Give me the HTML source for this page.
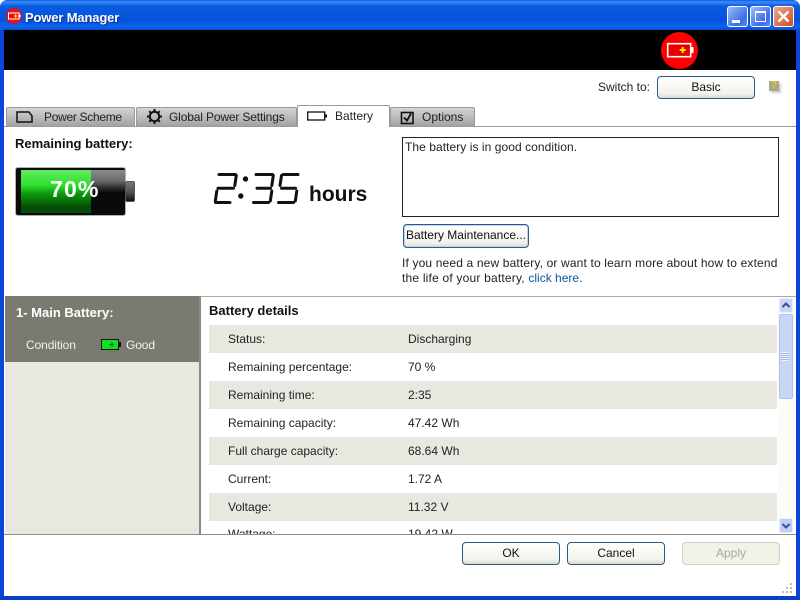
<!DOCTYPE html>
<html><head><meta charset="utf-8"><style>
*{box-sizing:border-box}
html,body{margin:0;padding:0;width:800px;height:600px;overflow:hidden;background:#fff}
body{position:relative;font:12px "Liberation Sans",sans-serif;color:#222}
.a{position:absolute;white-space:nowrap}
.tab{position:absolute;top:107px;height:19px;background:linear-gradient(#d4d4d4,#a2a2a2);border:1px solid #999;border-bottom:0;border-radius:2px 2px 0 0}
.btn{position:absolute;height:23px;border:1px solid #2a5a88;border-radius:4px;background:linear-gradient(#fff,#f3f2ea 80%,#dcd8cc);text-align:center;line-height:20px;color:#111}
.row{position:absolute;left:209px;width:568px;height:28px;background:#e8e8e1}
.l{position:absolute;left:228px}.v{position:absolute;left:408px}
</style></head><body>
<div class="a" style="left:0;top:0;width:800px;height:30px;background:linear-gradient(#0a5be8 0,#3c8cf8 2px,#0a5ce0 6px,#0553dd 20px,#0d62ee 27px,#0450d0 30px);border-radius:7px 7px 0 0"></div>
<div class="a" style="left:0;top:30px;width:4px;height:570px;background:#0a46d8"></div>
<div class="a" style="left:796px;top:30px;width:4px;height:570px;background:#0a46d8"></div>
<div class="a" style="left:0;top:596px;width:800px;height:4px;background:#0a40c8"></div>
<div class="a" style="left:4px;top:30px;width:792px;height:40px;background:#000"></div>

<svg class="a" style="left:5px;top:7px" width="18" height="18" viewBox="0 0 18 18"><circle cx="9" cy="9" r="8" fill="#e8101c"/><rect x="3.500" y="6" width="10.500" height="6" fill="#e8101c" stroke="#fff"/><rect x="14" y="7.500" width="1.500" height="3" fill="#fff"/><path d="M9 9h3.500M10.700 7.200v3.600" stroke="#ff0"/></svg>
<div class="a" style="left:25px;top:10px;font-size:13px;font-weight:bold;color:#fff;text-shadow:1px 1px 1px #0a2f90;letter-spacing:-.15px">Power Manager</div>

<div class="a" style="left:727px;top:6px;width:21px;height:21px;border:1px solid #fff;border-radius:3px;background:linear-gradient(135deg,#a0bcf8,#3a6ee8 70%,#5c88ee)"><div class="a" style="left:4px;top:13px;width:8px;height:3px;background:#fff"></div></div>
<div class="a" style="left:750px;top:6px;width:21px;height:21px;border:1px solid #fff;border-radius:3px;background:linear-gradient(135deg,#a0bcf8,#3a6ee8 70%,#5c88ee)"><div class="a" style="left:4px;top:4px;width:11px;height:11px;border:1px solid #fff;border-top-width:2px"></div></div>
<div class="a" style="left:773px;top:6px;width:21px;height:21px;border:1px solid #fff;border-radius:3px;background:linear-gradient(135deg,#f0a888,#d04c24)"><svg class="a" style="left:2px;top:2px" width="15" height="15"><path d="M2.500 2.500l10 10M12.500 2.500l-10 10" stroke="#fff" stroke-width="2.400"/></svg></div>

<svg class="a" style="left:661px;top:32px" width="37" height="37" viewBox="0 0 37 37"><circle cx="18.500" cy="18.500" r="18.500" fill="#f00"/><rect x="6.700" y="11.700" width="23" height="13" fill="#e80000" stroke="#fff" stroke-width="1.600"/><rect x="30" y="15" width="2.500" height="6" fill="#fff"/><path d="M18.700 18h6M21.700 15v6" stroke="#ffe800" stroke-width="2"/></svg>

<div class="a" style="left:598px;top:80px">Switch to:</div>
<div class="btn" style="left:657px;top:76px;width:98px;height:23px">Basic</div>
<div class="a" style="left:769px;top:81px;width:10px;height:10px;background:#a8a888;box-shadow:2px 2px 2px #ccc;color:#e6c820;font:bold 10px/10px 'Liberation Sans',sans-serif;text-align:center">?</div>

<div class="a" style="left:4px;top:126px;width:792px;height:1px;background:#9a9a9a"></div>
<div class="tab" style="left:6px;width:129px"></div>
<svg class="a" style="left:16px;top:111px" width="18" height="12"><path d="M1 1h12l3 4v6H1z" fill="none" stroke="#111" stroke-width="1.500"/></svg>
<div class="a" style="left:44px;top:110px;letter-spacing:-.3px">Power Scheme</div>
<div class="tab" style="left:136px;width:161px"></div>
<svg class="a" style="left:146px;top:108px" width="17" height="17" viewBox="0 0 17 17"><circle cx="8.500" cy="8.500" r="4.700" fill="none" stroke="#111" stroke-width="2"/><path d="M8.500 1v3M8.500 13v3M1 8.500h3M13 8.500h3M3.200 3.200l2 2M11.800 11.800l2 2M13.800 3.200l-2 2M5.200 11.800l-2 2" stroke="#111" stroke-width="2"/></svg>
<div class="a" style="left:169px;top:110px;letter-spacing:-.15px">Global Power Settings</div>
<div class="a" style="left:297px;top:105px;width:93px;height:22px;background:#fff;border:1px solid #999;border-bottom:0;border-radius:2px 2px 0 0"></div>
<svg class="a" style="left:306px;top:110px" width="22" height="12"><rect x="1.700" y="2" width="17" height="8" fill="none" stroke="#111" stroke-width="1.300"/><rect x="19" y="4.500" width="2" height="3" fill="#111"/></svg>
<div class="a" style="left:335px;top:109px">Battery</div>
<div class="tab" style="left:390px;width:85px"></div>
<svg class="a" style="left:400px;top:111px" width="15" height="14"><rect x="1.500" y="1.500" width="11.500" height="11" fill="none" stroke="#111" stroke-width="1.600"/><path d="M4 6.500l3 3 4-7" fill="none" stroke="#111" stroke-width="1.800"/></svg>
<div class="a" style="left:422px;top:110px">Options</div>

<div class="a" style="left:15px;top:136px;font-weight:bold;color:#111;font-size:13px">Remaining battery:</div>

<div class="a" style="left:15px;top:167px;width:111px;height:49px;border:1px solid #b0b0b0;border-radius:3px;background:#0a0a0a"></div>
<div class="a" style="left:91px;top:170px;width:34px;height:24px;background:linear-gradient(#8c8c8c,#6a6a6a 45%,#2a2a2a 75%,#000)"></div>
<div class="a" style="left:21px;top:170px;width:70px;height:43px;background:linear-gradient(#62ea62,#2fe02f 35%,#0c9a0c 55%,#045004 85%,#0a4a0a)"></div>
<div class="a" style="left:125px;top:181px;width:10px;height:21px;background:linear-gradient(#777,#555 50%,#111);border:1px solid #555;border-radius:2px"></div>
<div class="a" style="left:50px;top:176px;font-size:23px;font-weight:bold;color:#fff;letter-spacing:1.200px">70%</div>

<svg class="a" style="left:205px;top:165px" width="100" height="45" viewBox="205 165 100 45" fill="none" stroke="#111" stroke-width="3" stroke-linecap="round" stroke-linejoin="round">
<path d="M219 174.500h16.500M236.300 175.500l-1.500 10M218 188.300h15.500M216.800 191l-1.500 10M215.500 202.500h14.500"/>
<path d="M256 174.500h16.500M273.300 175.500l-1.500 10M257 188.300h13.500M271.800 191l-1.500 10M253.500 202.500h15"/>
<path d="M283 174.500h15M281.500 175.500l-1.500 10M281.500 188.300h14M296.800 191l-1.500 10M278.500 202.500h15"/>
<circle cx="245.500" cy="179" r="1.200" fill="#111"/><circle cx="240.800" cy="196" r="1.200" fill="#111"/>
</svg>
<div class="a" style="left:309px;top:183px;font-size:21px;font-weight:bold;color:#111">hours</div>

<div class="a" style="left:402px;top:137px;width:377px;height:80px;border:1px solid #222"></div>
<div class="a" style="left:405px;top:140px;letter-spacing:.06px">The battery is in good condition.</div>
<div class="btn" style="left:403px;top:224px;width:126px;height:24px;box-shadow:inset 0 0 0 1px #c0d4ee;line-height:21px">Battery Maintenance...</div>
<div class="a" style="left:402px;top:256px;letter-spacing:.15px">If you need a new battery, or want to learn more about how to extend</div>
<div class="a" style="left:402px;top:271px;letter-spacing:.2px">the life of your battery, <span style="color:#0a5a9c;letter-spacing:0">click here</span>.</div>

<div class="a" style="left:4px;top:296px;width:792px;height:238px;background:#fff"></div>
<div class="a" style="left:5px;top:296px;width:194px;height:238px;background:#e8e8e1"></div>
<div class="a" style="left:5px;top:296px;width:194px;height:66px;background:#7b7a70"></div>
<div class="a" style="left:199px;top:296px;width:2px;height:238px;background:#8a8a82"></div>
<div class="a" style="left:201px;top:296px;width:595px;height:1px;background:#aaa"></div>
<div class="a" style="left:16px;top:305px;color:#fff;font-weight:bold;font-size:13px">1- Main Battery:</div>
<div class="a" style="left:26px;top:338px;color:#f2f2ea;letter-spacing:-.1px">Condition</div>
<svg class="a" style="left:100px;top:338px" width="22" height="14"><rect x="1.500" y="1.500" width="17" height="10" fill="#10e020" stroke="#111"/><rect x="19" y="4" width="2" height="5" fill="#111"/><path d="M9 6.500h5M12 4v5" stroke="#063"/></svg>
<div class="a" style="left:126px;top:338px;color:#f2f2ea;letter-spacing:-.1px">Good</div>

<div class="a" style="left:209px;top:303px;font-weight:bold;color:#111;font-size:13px">Battery details</div>
<div class="row" style="top:325px"></div><div class="row" style="top:381px"></div><div class="row" style="top:437px"></div><div class="row" style="top:493px"></div>
<div class="l" style="top:332px">Status:</div><div class="v" style="top:332px">Discharging</div>
<div class="l" style="top:360px">Remaining percentage:</div><div class="v" style="top:360px">70 %</div>
<div class="l" style="top:388px">Remaining time:</div><div class="v" style="top:388px">2:35</div>
<div class="l" style="top:416px">Remaining capacity:</div><div class="v" style="top:416px">47.42 Wh</div>
<div class="l" style="top:444px">Full charge capacity:</div><div class="v" style="top:444px">68.64 Wh</div>
<div class="l" style="top:472px">Current:</div><div class="v" style="top:472px">1.72 A</div>
<div class="l" style="top:500px">Voltage:</div><div class="v" style="top:500px">11.32 V</div>
<div class="a" style="left:201px;top:527px;width:575px;height:7px;overflow:hidden"><div class="a" style="left:27px;top:0">Wattage:</div><div class="a" style="left:207px;top:0">19.42 W</div></div>

<div class="a" style="left:778px;top:297px;width:17px;height:237px;background:#fbfbf8"></div>
<div class="a" style="left:779px;top:298px;width:14px;height:15px;background:#c8d6f8;border:1px solid #e8eefc;border-radius:2px"><svg width="12" height="13"><path d="M2.500 8L6 4.500 9.500 8" fill="none" stroke="#3a4f8c" stroke-width="2"/></svg></div>
<div class="a" style="left:779px;top:314px;width:14px;height:85px;background:#c8d6f8;border:1px solid #b0c2ec;border-radius:2px"></div>
<div class="a" style="left:782px;top:352px;width:7px;height:9px;background:repeating-linear-gradient(#eef3ff 0 1px,#a4b6e6 1px 2px)"></div>
<div class="a" style="left:779px;top:518px;width:14px;height:15px;background:#c0cef8;border:1px solid #e8eefc;border-radius:2px"><svg width="12" height="13"><path d="M2.500 5L6 8.500 9.500 5" fill="none" stroke="#3a4f8c" stroke-width="2"/></svg></div>
<div class="a" style="left:4px;top:534px;width:792px;height:1px;background:#8f8f88"></div>

<div class="btn" style="left:462px;top:542px;width:98px">OK</div>
<div class="btn" style="left:567px;top:542px;width:98px">Cancel</div>
<div class="btn" style="left:682px;top:542px;width:98px;border-color:#cfcfc2;background:#f2f2e8;color:#a8a89a">Apply</div>
<svg class="a" style="left:782px;top:582px" width="13" height="13" fill="#b8b8b0"><rect x="8" y="1" width="2" height="2"/><rect x="4" y="5" width="2" height="2"/><rect x="8" y="5" width="2" height="2"/><rect x="0" y="9" width="2" height="2"/><rect x="4" y="9" width="2" height="2"/><rect x="8" y="9" width="2" height="2"/></svg>
</body></html>
